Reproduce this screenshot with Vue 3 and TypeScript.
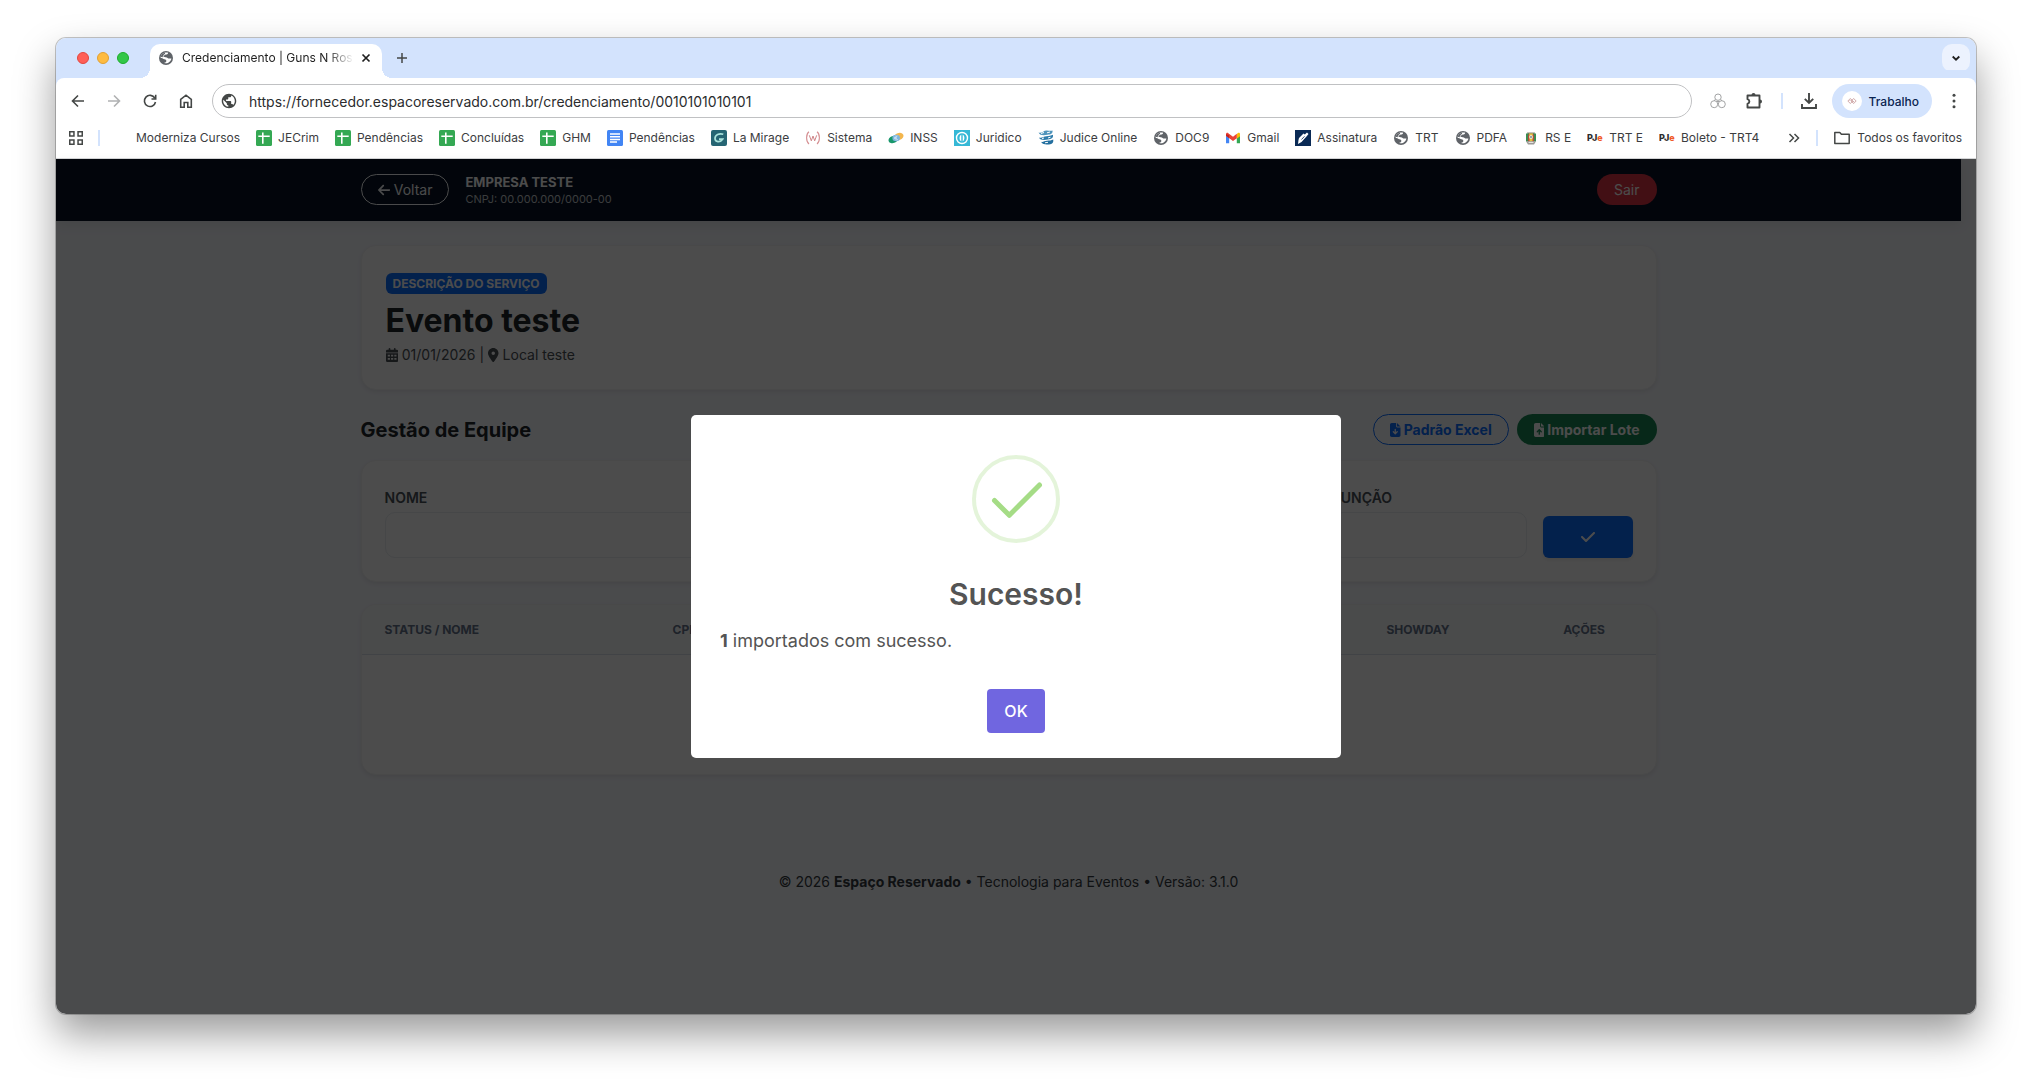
<script setup lang="ts">
import { ref } from 'vue'

type IconKind =
  | 'blank' | 'sheet' | 'doc' | 'mirage' | 'sistema' | 'inss' | 'juridico' | 'judice'
  | 'globe' | 'gmail' | 'assinatura' | 'rs' | 'pje'

interface Bookmark {
  label: string
  icon: IconKind
}

const bookmarks: Bookmark[] = [
  { label: 'Moderniza Cursos', icon: 'blank' },
  { label: 'JECrim', icon: 'sheet' },
  { label: 'Pendências', icon: 'sheet' },
  { label: 'Concluídas', icon: 'sheet' },
  { label: 'GHM', icon: 'sheet' },
  { label: 'Pendências', icon: 'doc' },
  { label: 'La Mirage', icon: 'mirage' },
  { label: 'Sistema', icon: 'sistema' },
  { label: 'INSS', icon: 'inss' },
  { label: 'Juridico', icon: 'juridico' },
  { label: 'Judice Online', icon: 'judice' },
  { label: 'DOC9', icon: 'globe' },
  { label: 'Gmail', icon: 'gmail' },
  { label: 'Assinatura', icon: 'assinatura' },
  { label: 'TRT', icon: 'globe' },
  { label: 'PDFA', icon: 'globe' },
  { label: 'RS E', icon: 'rs' },
  { label: 'TRT E', icon: 'pje' },
  { label: 'Boleto - TRT4', icon: 'pje' },
]

const address = ref('https://fornecedor.espacoreservado.com.br/credenciamento/0010101010101')
const nome = ref('')
const cpf = ref('')
const empresa = ref('')
const funcao = ref('')
const imported = ref(1)
</script>

<template>
  <div class="desktop">
    <div class="window">
      <div class="tabstrip">
        <div class="lights">
          <span class="light red"></span>
          <span class="light amber"></span>
          <span class="light green"></span>
        </div>
        <div class="tab">
          <svg class="i16" viewBox="0 0 16 16">
            <circle cx="8" cy="8" r="7" fill="#5f6368" />
            <path d="M10.200 2.700C9.800 4.300 8.900 4.400 7.500 4.600 6.900 5.500 6.300 5.600 5.200 5.600 5.300 7 5.800 7.200 7.700 7.200 9.600 7.200 9.800 8.500 11.200 8.600H13.400C13.200 10.500 11.500 12.600 9.100 13.200 7.700 13.400 6.600 13.200 6.200 12.700 8 12.500 8.500 11.500 8.300 10.400 7.900 9.100 6.600 9.300 5.500 8.900 4.600 8.400 4 7.800 2.600 7.700 2.600 4.500 5.500 1.800 10.200 2.700Z" fill="#fff" />
            <path d="M2.600 6.800C3.300 4.600 5 3.100 7.200 2.700L6.900 3.900 5.100 5.300 4.600 7.200Z" fill="#5f6368" />
          </svg>
          <span class="tab-title">Credenciamento | Guns N Ros</span>
          <button class="plain tab-close" aria-label="Fechar guia">
            <svg class="i16" viewBox="0 0 16 16"><path d="M4.500 4.500l7 7M11.500 4.500l-7 7" stroke="#1f1f1f" stroke-width="1.700" /></svg>
          </button>
        </div>
        <button class="plain new-tab" aria-label="Nova guia">
          <svg class="i16" viewBox="0 0 16 16"><path d="M8 3v10M3 8h10" stroke="#444746" stroke-width="1.500" /></svg>
        </button>
        <button class="plain tab-search" aria-label="Pesquisar guias">
          <svg class="i16" viewBox="0 0 16 16"><path d="M4.700 6.500L8 9.700l3.300-3.200" fill="none" stroke="#1f1f1f" stroke-width="1.800" /></svg>
        </button>
      </div>

      <div class="toolbar">
        <button class="plain nav" aria-label="Voltar página">
          <svg class="i16" viewBox="0 0 16 16"><path d="M14 8H3M8 2.500L2.500 8 8 13.500" fill="none" stroke="#444746" stroke-width="1.600" /></svg>
        </button>
        <button class="plain nav" aria-label="Avançar">
          <svg class="i16" viewBox="0 0 16 16"><path d="M2 8h11M8 2.500L13.500 8 8 13.500" fill="none" stroke="#b0b1b2" stroke-width="1.600" /></svg>
        </button>
        <button class="plain nav" aria-label="Recarregar">
          <svg class="i16" viewBox="0 0 16 16"><path d="M12.800 5A5.600 5.600 0 1 0 13.500 9M13.700 1.800V6H9.500" fill="none" stroke="#444746" stroke-width="1.600" /></svg>
        </button>
        <button class="plain nav" aria-label="Página inicial">
          <svg class="i16" viewBox="0 0 16 16"><path d="M2.700 6.300L8 2.200l5.300 4.100v8H9.800V9.500H6.200v4.800H2.700z" fill="none" stroke="#444746" stroke-width="1.600" /></svg>
        </button>
        <label class="omnibox">
          <svg class="i16" viewBox="1 1 22 22"><path fill="#444746" d="M12 2C6.480 2 2 6.480 2 12s4.480 10 10 10 10-4.480 10-10S17.520 2 12 2zm-1 17.930c-3.950-.490-7-3.850-7-7.930 0-.620.080-1.210.210-1.790L9 15v1c0 1.100.900 2 2 2v1.930zm6.900-2.540c-.260-.810-1-1.390-1.900-1.390h-1v-3c0-.550-.450-1-1-1H8v-2h2c.550 0 1-.450 1-1V7h2c1.100 0 2-.900 2-2v-.410c2.930 1.190 5 4.060 5 7.410 0 2.080-.800 3.970-2.100 5.390z" /></svg>
          <input v-model="address" type="text" aria-label="Endereço" />
        </label>
        <button class="plain ext" aria-label="Extensão">
          <svg class="i16" viewBox="0 0 16 16" fill="none" stroke="#a2a3a4" stroke-width="1">
            <circle cx="8" cy="4.200" r="3.200" /><circle cx="4.200" cy="11.200" r="3.500" /><circle cx="11.800" cy="11.200" r="3.500" /><path d="M5 6.500L4.300 8M11 6.500l.700 1.500M6.500 8.500h3" />
          </svg>
        </button>
        <button class="plain ext" aria-label="Extensões">
          <svg class="i18" viewBox="0 0 18 18"><path d="M2.500 3.500h12v12h-12v-3.700c2.500-.800 2.500-3.800 0-4.600z" fill="none" stroke="#444746" stroke-width="1.900" stroke-linejoin="round" /><path d="M6.500 3a2 2 0 0 1 4 0zM15 7.500a2 2 0 0 1 0 4z" fill="#444746" /></svg>
        </button>
        <span class="divider"></span>
        <button class="plain ext" aria-label="Downloads">
          <svg class="i18" viewBox="0 0 18 18"><path d="M9 1v9.500M4.800 6.800L9 11l4.200-4.200M2 12v4h14v-4" fill="none" stroke="#444746" stroke-width="1.900" /></svg>
        </button>
        <button class="profile">
          <span class="avatar">
            <svg viewBox="0 0 12 8" fill="none" stroke="#b98080" stroke-width="0.800"><path d="M1 4l3-3 3 3-3 3zM5 4l3-3 3 3-3 3z" /><path d="M3 4l1.500-1.500M7 5.500L8.500 4" /></svg>
          </span>
          Trabalho
        </button>
        <button class="plain more" aria-label="Menu">
          <svg class="i16" viewBox="0 0 16 16" fill="#444746"><circle cx="8" cy="2.200" r="1.500" /><circle cx="8" cy="8" r="1.500" /><circle cx="8" cy="13.800" r="1.500" /></svg>
        </button>
      </div>

      <nav class="bookmarks">
        <button class="plain apps" aria-label="Aplicativos">
          <svg class="i16" viewBox="0 0 16 16" fill="none" stroke="#444746" stroke-width="1.500"><path d="M1.750 1.750h4.200v4.200h-4.200zM10.050 1.750h4.200v4.200h-4.200zM1.750 10.050h4.200v4.200h-4.200zM10.050 10.050h4.200v4.200h-4.200z" /></svg>
        </button>
        <span class="divider"></span>
        <div class="bookmark-list">
          <a v-for="(b, i) in bookmarks" :key="i" href="#" class="bookmark">
            <svg class="i16" viewBox="0 0 16 16">
              <template v-if="b.icon === 'sheet'">
                <rect width="16" height="16" rx="1.500" fill="#34a853" />
                <path d="M2.300 6.300h11.400M6.800 2.500v11.200" stroke="#fff" stroke-width="1.600" />
              </template>
              <template v-else-if="b.icon === 'doc'">
                <rect width="16" height="16" rx="1.500" fill="#4285f4" />
                <path d="M3 4h10M3 6.700h10M3 9.400h10M3 12.100h7" stroke="#fff" stroke-width="1.500" />
              </template>
              <template v-else-if="b.icon === 'mirage'">
                <rect width="16" height="16" rx="2" fill="#256573" />
                <path d="M12.300 4.300C8.200 2.800 4 5 4 8.500c0 3.600 5.200 4.300 7.600.700H8" fill="none" stroke="#a9e3dc" stroke-width="1.700" />
              </template>
              <template v-else-if="b.icon === 'sistema'">
                <path d="M4 1.800C.800 4 .800 11.500 4 14M12 1.800c3.200 2.200 3.200 9.700 0 12.200" fill="none" stroke="#d58f92" stroke-width="1.100" />
                <path d="M4.300 5.300l2 5.500L8 6l1.700 4.800 2-5.500" fill="none" stroke="#c9787c" stroke-width="0.900" />
              </template>
              <template v-else-if="b.icon === 'inss'">
                <ellipse cx="10.800" cy="6.500" rx="4.800" ry="3.500" transform="rotate(-20 10.800 6.500)" fill="#f3b64d" />
                <ellipse cx="5.200" cy="9.500" rx="4.800" ry="3.500" transform="rotate(-20 5.200 9.500)" fill="#18976c" />
                <ellipse cx="8.200" cy="8" rx="3.800" ry="3.300" fill="#7fb5dd" />
                <path d="M6 7l4 3M6 9l3.500-3M8 5.500v5" stroke="#dceaf6" stroke-width="0.700" />
              </template>
              <template v-else-if="b.icon === 'juridico'">
                <rect width="16" height="16" fill="#35b8d6" />
                <circle cx="8" cy="8" r="5.500" fill="none" stroke="#fff" stroke-width="1.400" />
                <path d="M7.300 4.500v7C5 10 5 6 7.300 4.500zM8.700 4.500v7C11 10 11 6 8.700 4.500z" fill="#fff" />
              </template>
              <template v-else-if="b.icon === 'judice'">
                <path d="M.500 2.500c3 1.500 5-2 8-2 2.500 0 4 .800 6 0 .500 3.500-2 3.800-5 4.300C6.500 5.300 2 6 .500 2.500z" fill="#4f94bb" />
                <path d="M1 7.500c3 1 4.500-1.300 7.500-1.300 2.500 0 4.500-.600 6.500-1.400.5 3.500-2 4.300-5 4.800s-8 1-9-2.100z" fill="#2e7cab" />
                <path d="M3 11.800c2.500.800 3-1 6-1 2.300 0 4.500-.400 6.200-1.200.5 2.900-.7 4.800-4.200 4.800-2 0-6 .800-8-2.600z" fill="#236f9f" />
                <path d="M3 3.500l3-1M9 2.800l3-.8M10 8l2.500-.800M4 8.500l2-.5M7 12.800l3-.5" stroke="#fff" stroke-width="1" />
              </template>
              <template v-else-if="b.icon === 'globe'">
                <circle cx="8" cy="8" r="7" fill="#5f6368" />
                <path d="M10.200 2.700C9.800 4.300 8.900 4.400 7.500 4.600 6.900 5.500 6.300 5.600 5.200 5.600 5.300 7 5.800 7.200 7.700 7.200 9.600 7.200 9.800 8.500 11.200 8.600H13.400C13.200 10.500 11.500 12.600 9.100 13.200 7.700 13.400 6.600 13.200 6.200 12.700 8 12.500 8.500 11.500 8.300 10.400 7.900 9.100 6.600 9.300 5.500 8.900 4.600 8.400 4 7.800 2.600 7.700 2.600 4.500 5.500 1.800 10.200 2.700Z" fill="#fff" />
                <path d="M2.600 6.800C3.300 4.600 5 3.100 7.200 2.700L6.900 3.900 5.100 5.300 4.600 7.200Z" fill="#5f6368" />
              </template>
              <template v-else-if="b.icon === 'gmail'">
                <path d="M1 4v9.300h3.200V6.400z" fill="#4285f4" />
                <path d="M15 4v9.300h-3.200V6.400z" fill="#34a853" />
                <path d="M11.800 4L15 4.500v1.800l-3.200 2.400z" fill="#fbbc04" />
                <path d="M13 3.100c.800-.600 2-.200 2 1.200l-3.200 2.400V4z" fill="#fbbc04" />
                <path d="M1 4.300c0-1.400 1.300-1.900 2.300-1.100L8 6.700l3.800-2.900v4.400L8 11 1 5.800z" fill="#ea4335" />
                <path d="M1 4.300v1.500l3.200 2.400V5z" fill="#c5221f" />
              </template>
              <template v-else-if="b.icon === 'assinatura'">
                <rect width="16" height="16" fill="#0a2a55" />
                <path d="M4 8l4.500-4.500 1.300 1L12 2.500 13.500 4l-2 2.500-5 5.500-3.500 2L3.500 10z" fill="#fff" />
                <path d="M6.500 9.500l3-3.200" stroke="#0a2a55" stroke-width="0.800" />
              </template>
              <template v-else-if="b.icon === 'rs'">
                <path d="M4 2.500h8l-.5 1.500h-7z" fill="#8d8576" />
                <path d="M3 3.500h3v8H3z" fill="#3b8d52" /><path d="M10 3.500h3v8h-3z" fill="#3b8d52" />
                <path d="M6 3.500h4v8H6z" fill="#e4c33b" /><path d="M5.200 4.500h1.300v7H5.200zM9.500 4.500h1.300v7H9.500z" fill="#cf3d35" />
                <circle cx="8" cy="7" r="1.900" fill="#e9e4d6" /><circle cx="8" cy="7" r="0.900" fill="#6b8798" />
                <path d="M3 11.300h10l-2 3.200H5z" fill="#9b9a96" /><path d="M5.500 12.500h5" stroke="#fff" stroke-width="0.700" />
              </template>
              <text v-else-if="b.icon === 'pje'" x="0" y="11" class="pje">PJ<tspan fill="#f05a28">e</tspan></text>
            </svg>
            <span>{{ b.label }}</span>
          </a>
        </div>
        <button class="plain overflow" aria-label="Mais favoritos">
          <svg class="i16" viewBox="0 0 16 16"><path d="M3.500 4l4 4-4 4M8.500 4l4 4-4 4" fill="none" stroke="#444746" stroke-width="1.500" /></svg>
        </button>
        <span class="divider"></span>
        <a href="#" class="bookmark all">
          <svg class="i16" viewBox="0 0 16 16"><path d="M.800 13.500v-11h5l1.600 1.700h7.800v9.300z" fill="none" stroke="#444746" stroke-width="1.500" stroke-linejoin="round" /></svg>
          <span>Todos os favoritos</span>
        </a>
      </nav>

      <div class="viewport">
        <div class="page">
          <header class="app-header">
            <div class="container header-row">
              <a href="#" class="pill back">
                <svg class="fa" viewBox="0 0 448 512"><path d="M9.400 233.400c-12.500 12.500-12.500 32.800 0 45.300l160 160c12.500 12.500 32.800 12.500 45.300 0s12.500-32.800 0-45.300L109.200 288 416 288c17.700 0 32-14.300 32-32s-14.300-32-32-32l-306.700 0L214.600 118.600c12.500-12.500 12.500-32.800 0-45.300s-32.800-12.500-45.300 0l-160 160z" /></svg>
                Voltar
              </a>
              <div class="company">
                <strong>EMPRESA TESTE</strong>
                <span>CNPJ: 00.000.000/0000-00</span>
              </div>
              <a href="#" class="pill exit">Sair</a>
            </div>
          </header>

          <main class="container">
            <section class="card event">
              <span class="badge">DESCRIÇÃO DO SERVIÇO</span>
              <h1>Evento teste</h1>
              <p class="meta">
                <svg class="fa" viewBox="0 0 448 512"><path fill-rule="evenodd" d="M96 32a32 32 0 0 1 64 0V64H288V32a32 32 0 0 1 64 0V64h48a48 48 0 0 1 48 48v48H0V112A48 48 0 0 1 48 64H96zM0 192H448V464a48 48 0 0 1-48 48H48a48 48 0 0 1-48-48zM64 250v60h80v-60zM184 250v60h80v-60zM304 250v60h80v-60zM64 370v60h80v-60zM184 370v60h80v-60zM304 370v60h80v-60z" /></svg>
                01/01/2026 |
                <svg class="fa pin" viewBox="0 0 384 512"><path fill-rule="evenodd" d="M215.700 499.200C267 435 384 279.400 384 192C384 86 298 0 192 0S0 86 0 192c0 87.400 117 243 168.300 307.200c12.300 15.300 35.100 15.300 47.400 0zM192 128a64 64 0 1 1 0 128 64 64 0 1 1 0-128z" /></svg>
                Local teste
              </p>
            </section>

            <div class="team-row">
              <h2>Gestão de Equipe</h2>
              <button class="pill outline">
                <svg class="fa file" viewBox="0 0 384 512"><path fill-rule="evenodd" d="M64 0C28.700 0 0 28.700 0 64L0 448c0 35.300 28.700 64 64 64l256 0c35.300 0 64-28.700 64-64l0-288-128 0c-17.700 0-32-14.300-32-32L224 0 64 0zM256 0l0 128 128 0L256 0zM216 232l0 102.100 31-31c9.400-9.400 24.600-9.400 33.900 0s9.400 24.600 0 33.900l-72 72c-9.400 9.400-24.600 9.400-33.900 0l-72-72c-9.400-9.400-9.400-24.600 0-33.900s24.600-9.400 33.900 0l31 31L168 232c0-13.300 10.700-24 24-24s24 10.700 24 24z" /></svg>
                Padrão Excel
              </button>
              <button class="pill solid">
                <svg class="fa file" viewBox="0 0 384 512"><path fill-rule="evenodd" d="M64 0C28.700 0 0 28.700 0 64L0 448c0 35.300 28.700 64 64 64l256 0c35.300 0 64-28.700 64-64l0-288-128 0c-17.700 0-32-14.300-32-32L224 0 64 0zM256 0l0 128 128 0L256 0zM216 408c0 13.300-10.700 24-24 24s-24-10.700-24-24l0-102.100-31 31c-9.400 9.400-24.600 9.400-33.900 0s-9.400-24.600 0-33.900l72-72c9.400-9.400 24.600-9.400 33.900 0l72 72c9.400 9.400 9.400 24.600 0 33.900s-24.600 9.400-33.900 0l-31-31L216 408z" /></svg>
                Importar Lote
              </button>
            </div>

            <form class="card form" @submit.prevent>
              <div class="field wide">
                <label for="nome">NOME</label>
                <input id="nome" v-model="nome" type="text" />
              </div>
              <div class="field mid">
                <label for="cpf">CPF</label>
                <input id="cpf" v-model="cpf" type="text" />
              </div>
              <div class="field">
                <label for="empresa">EMPRESA</label>
                <input id="empresa" v-model="empresa" type="text" />
              </div>
              <div class="field">
                <label for="funcao">FUNÇÃO</label>
                <input id="funcao" v-model="funcao" type="text" />
              </div>
              <button class="submit" aria-label="Adicionar">
                <svg class="fa" viewBox="0 0 448 512"><path d="M438.600 105.400c12.500 12.500 12.500 32.800 0 45.300l-256 256c-12.500 12.500-32.800 12.500-45.300 0l-128-128c-12.500-12.500-12.500-32.800 0-45.300s32.800-12.500 45.300 0L160 338.700 393.400 105.400c12.500-12.500 32.800-12.500 45.300 0z" /></svg>
              </button>
            </form>

            <section class="card team">
              <table>
                <colgroup>
                  <col class="c-name" /><col /><col class="c-show" /><col class="c-act" />
                </colgroup>
                <thead>
                  <tr>
                    <th>STATUS / NOME</th>
                    <th>CPF</th>
                    <th class="center">SHOWDAY</th>
                    <th class="center">AÇÕES</th>
                  </tr>
                </thead>
                <tbody>
                  <tr><td colspan="4"></td></tr>
                </tbody>
              </table>
            </section>
          </main>

          <footer>© 2026 <strong>Espaço Reservado</strong> • Tecnologia para Eventos • Versão: 3.1.0</footer>
        </div>

        <div class="backdrop">
          <div class="modal" role="dialog" aria-modal="true" aria-labelledby="modal-title">
            <svg class="success" viewBox="0 0 88 88" fill="none">
              <circle cx="44" cy="44" r="42" stroke="#a5dc86" stroke-opacity="0.300" stroke-width="4" />
              <path d="M22.500 45.500L37.300 60.300 67.500 30" stroke="#a5dc86" stroke-width="5" stroke-linecap="round" stroke-linejoin="round" />
            </svg>
            <h2 id="modal-title">Sucesso!</h2>
            <p><strong>{{ imported }}</strong> importados com sucesso.</p>
            <button class="ok">OK</button>
          </div>
        </div>
      </div>
    </div>
  </div>
</template>

<style>
body {
  margin: 0;
  background: #fff;
}
</style>

<style scoped>
* {
  box-sizing: border-box;
}
.desktop {
  display: flex;
  min-height: 100vh;
  padding: 38px 56px 74px;
  font-family: Inter, "Liberation Sans", sans-serif;
}
.window {
  display: flex;
  flex: 1;
  min-width: 0;
  flex-direction: column;
  overflow: hidden;
  border-radius: 10px;
  background: #fff;
  box-shadow: 0 0 0 1px rgba(0, 0, 0, 0.22), 0 20px 40px rgba(0, 0, 0, 0.4);
}
button,
input {
  font-family: inherit;
}
a {
  color: inherit;
  text-decoration: none;
}
svg {
  flex: none;
}
.plain {
  display: flex;
  align-items: center;
  justify-content: center;
  padding: 0;
  border: 0;
  background: none;
}
.i16 {
  width: 16px;
  height: 16px;
}
.i18 {
  width: 18px;
  height: 18px;
}

/* Tab strip */
.tabstrip {
  display: flex;
  align-items: flex-end;
  height: 40px;
  padding: 0 6px 0 21px;
  background: #d3e3fd;
}
.lights {
  display: flex;
  gap: 8px;
  width: 73px;
  padding-bottom: 14px;
}
.light {
  width: 12px;
  height: 12px;
  border: 1px solid;
  border-radius: 50%;
}
.red {
  border-color: #e2463f;
  background: #ff5f57;
}
.amber {
  border-color: #e1a032;
  background: #febb40;
}
.green {
  border-color: #1dad2b;
  background: #33c748;
}
.tab {
  position: relative;
  display: flex;
  align-items: center;
  width: 232px;
  height: 34px;
  padding: 0 8px 6px;
  border-radius: 10px 10px 0 0;
  background: #fff;
}
.tab::before,
.tab::after {
  position: absolute;
  bottom: 0;
  width: 10px;
  height: 10px;
  content: "";
}
.tab::before {
  right: 100%;
  background: radial-gradient(circle at 0 0, transparent 10px, #fff 10px);
}
.tab::after {
  left: 100%;
  background: radial-gradient(circle at 100% 0, transparent 10px, #fff 10px);
}
.tab-title {
  flex: 1;
  margin: 0 4px 0 8px;
  color: #1f1f1f;
  font-size: 12px;
  line-height: 20px;
  white-space: nowrap;
  mask-image: linear-gradient(to left, transparent, #000 28px);
}
.new-tab {
  height: 28px;
  margin: 0 auto 6px 12px;
}
.tab-search {
  width: 28px;
  height: 28px;
  margin-bottom: 6px;
  border-radius: 10px;
  background: #ecf2fe;
}

/* Toolbar */
.toolbar {
  display: flex;
  align-items: center;
  height: 46px;
  padding: 0 14px;
  background: #fff;
  border-radius: 8px 8px 0 0;
  box-shadow: 0 -8px 0 #d3e3fd;
}
.nav {
  width: 16px;
  margin-right: 20px;
}
.omnibox {
  display: flex;
  flex: 1;
  align-items: center;
  gap: 12px;
  height: 34px;
  margin: 0 17px 0 -2px;
  padding: 0 8px;
  border: 1px solid #c0c1c3;
  border-radius: 17px;
}
.omnibox input {
  flex: 1;
  padding: 0;
  border: 0;
  outline: 0;
  background: none;
  color: #2b2c2e;
  font-size: 14px;
}
.ext {
  width: 18px;
  margin-right: 18px;
}
.divider {
  flex: none;
  width: 2px;
  height: 16px;
  background: #d3e3fd;
}
.toolbar .divider {
  margin-right: 17px;
}
.profile {
  display: flex;
  align-items: center;
  gap: 7px;
  height: 34px;
  padding: 0 13px 0 10px;
  border: 0;
  border-radius: 17px;
  margin-left: -4px;
  background: #d3e3fd;
  color: #0a2351;
  font-size: 12px;
  font-weight: 500;
}
.avatar {
  display: flex;
  align-items: center;
  justify-content: center;
  width: 20px;
  height: 20px;
  border-radius: 50%;
  background: #fff;
}
.avatar svg {
  width: 10px;
  height: 8px;
}
.more {
  width: 16px;
  margin-left: 14px;
}

/* Bookmarks bar */
.bookmarks {
  display: flex;
  align-items: center;
  height: 35px;
  padding: 0 14px 7px 12px;
  border-bottom: 1px solid #d5d6d8;
  background: #fff;
}
.apps {
  margin-right: 14px;
}
.bookmark-list {
  display: flex;
  flex: 1;
  gap: 16px;
  min-width: 0;
  padding-left: 14px;
}
.bookmark {
  display: flex;
  align-items: center;
  gap: 6px;
  color: #3c3d3f;
  font-size: 12px;
  line-height: 18px;
  white-space: nowrap;
}
.bookmark.all {
  gap: 7px;
  margin-left: 16px;
}
.overflow {
  margin-right: 14px;
}
.pje {
  fill: #2d2d2d;
  font-size: 9px;
  font-weight: 800;
}

/* Page */
.viewport {
  position: relative;
  flex: 1;
  background: #f8faff;
}
.page {
  margin-right: 15px;
  color: #212529;
}
.container {
  width: 100%;
  max-width: 1320px;
  margin: 0 auto;
  padding: 0 12px;
}
.app-header {
  background: #071325;
  box-shadow: 0 4px 12px rgba(0, 0, 0, 0.08);
}
.header-row {
  display: flex;
  align-items: center;
  height: 62px;
  padding-bottom: 1px;
}
.pill {
  display: flex;
  align-items: center;
  gap: 4px;
  height: 31px;
  padding: 0 16px;
  border: 1px solid transparent;
  border-radius: 16px;
  font-size: 14px;
  line-height: 21px;
  white-space: nowrap;
}
.fa {
  height: 14px;
  fill: currentColor;
}
.back {
  margin-right: 16px;
  border-color: #f8f9fa;
  color: #f8f9fa;
}
.company {
  display: flex;
  flex: 1;
  flex-direction: column;
  color: #fff;
}
.company strong {
  font-size: 13px;
  line-height: 18px;
}
.company span {
  color: #c4c8cc;
  font-size: 11px;
  line-height: 16px;
}
.exit {
  background: #dc3545;
  color: #fff;
}
.card {
  border: 1px solid #f3f4f5;
  border-radius: 15px;
  background: #fff;
  box-shadow: 0 2px 4px rgba(0, 0, 0, 0.075);
}
.event {
  margin-top: 24px;
  padding: 27px 24px 24px;
}
.badge {
  display: block;
  width: fit-content;
  padding: 0 7px;
  border-radius: 6px;
  background: #0d6efd;
  color: #fff;
  font-size: 12px;
  font-weight: 700;
  line-height: 21px;
}
h1 {
  margin: 8px 0 4px;
  font-size: 32px;
  font-weight: 700;
  line-height: 38px;
}
.meta {
  display: flex;
  align-items: center;
  gap: 4px;
  margin: 0;
  color: #4a5056;
  font-size: 14px;
  line-height: 21px;
}
.team-row {
  display: flex;
  align-items: center;
  gap: 8px;
  margin: 24px 0 15px;
}
.team-row h2 {
  flex: 1;
  margin: 0;
  font-size: 20px;
  font-weight: 700;
  line-height: 24px;
}
.team-row .pill {
  gap: 3px;
  font-weight: 700;
}
.outline {
  border-color: #0d6efd;
  background: none;
  color: #0d6efd;
}
.solid {
  background: #198754;
  color: #fff;
}
.form {
  display: grid;
  grid-template-columns: repeat(12, 1fr);
  gap: 16px;
  align-items: end;
  padding: 27px 23px 23px;
}
.field {
  display: flex;
  grid-column: span 2;
  flex-direction: column;
  gap: 5px;
}
.field.wide {
  grid-column: span 4;
}
.field.mid {
  grid-column: span 3;
}
.field label {
  color: #495057;
  font-size: 14px;
  font-weight: 600;
  line-height: 19px;
}
.field input {
  width: 100%;
  height: 46px;
  padding: 0 12px;
  border: 1px solid #e9edf1;
  border-radius: 10px;
  background: #fff;
}
.submit {
  display: flex;
  align-items: center;
  justify-content: center;
  height: 42px;
  border: 0;
  border-radius: 6px;
  background: #0d6efd;
  box-shadow: 0 2px 4px rgba(0, 0, 0, 0.075);
  color: #fff;
}
.submit .fa {
  height: 16px;
}
.team {
  overflow: hidden;
  margin-top: 22px;
}
table {
  width: 100%;
  border-collapse: collapse;
  table-layout: fixed;
}
.c-name {
  width: 288px;
}
.c-show {
  width: 189px;
}
.c-act {
  width: 143px;
}
th {
  height: 49px;
  padding: 0 23px;
  border-bottom: 1px solid #d9e1ea;
  background: #f8fafc;
  color: #64748b;
  font-size: 12px;
  font-weight: 700;
  text-align: left;
}
th.center {
  padding: 0;
  text-align: center;
}
td {
  height: 120px;
  padding: 0;
}
footer {
  padding: 96px 0 48px;
  color: #343a40;
  font-size: 14px;
  line-height: 21px;
  text-align: center;
}

/* Modal */
.backdrop {
  position: absolute;
  inset: 0;
  display: flex;
  align-items: center;
  justify-content: center;
  background: rgba(0, 0, 0, 0.7);
}
.modal {
  display: flex;
  flex-direction: column;
  align-items: center;
  width: 650px;
  max-width: 100%;
  padding: 40px 29px 25px;
  border-radius: 5px;
  background: #fff;
  color: #545454;
}
.success {
  width: 88px;
  height: 88px;
}
.modal h2 {
  margin: 33px 0 18px;
  font-size: 30px;
  font-weight: 600;
  line-height: 36px;
}
.modal p {
  align-self: stretch;
  margin: 0 0 37px;
  font-size: 18px;
  line-height: 22px;
}
.ok {
  height: 44px;
  padding: 0 17px;
  border: 0;
  border-radius: 4px;
  background: #7066e0;
  color: #fff;
  font-size: 16px;
  font-weight: 500;
}
</style>
